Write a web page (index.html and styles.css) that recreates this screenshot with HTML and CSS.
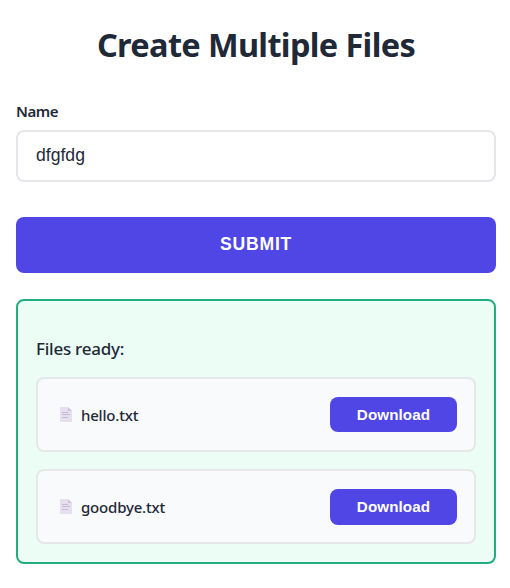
FILE: index.html
```html
<!DOCTYPE html>
<html lang="en">
<head>
<meta charset="utf-8">
<title>Create Multiple Files</title>
<link rel="stylesheet" href="styles.css">
</head>
<body>
<main class="page">
  <h1 class="title">Create Multiple Files</h1>
  <form class="form">
    <label class="label" for="name">Name</label>
    <input class="input" id="name" type="text" value="dfgfdg">
    <button class="submit" type="button">SUBMIT</button>
  </form>
  <section class="result">
    <p class="heading">Files ready:</p>
    <div class="file">
      <svg class="icon" viewBox="0 0 12 15"><path fill="#e6dfee" d="M0 0h8l4 4v11H0z"/><path fill="#cfc3dc" d="M8 0l4 4H8z"/><path stroke="#c3b5d0" stroke-width=".9" d="M2 5.5h6M2 7.5h8M2 10.5h6"/></svg>
      <span class="name">hello.txt</span>
      <button class="download" type="button">Download</button>
    </div>
    <div class="file">
      <svg class="icon" viewBox="0 0 12 15"><path fill="#e6dfee" d="M0 0h8l4 4v11H0z"/><path fill="#cfc3dc" d="M8 0l4 4H8z"/><path stroke="#c3b5d0" stroke-width=".9" d="M2 5.5h6M2 7.5h8M2 10.5h6"/></svg>
      <span class="name">goodbye.txt</span>
      <button class="download download-last" type="button">Download</button>
    </div>
  </section>
</main>
</body>
</html>
```
FILE: styles.css
```css
* { box-sizing: border-box; }
body {
  margin: 0;
  background: #fff;
  color: #1f2937;
  font-family: "Noto Sans", sans-serif;
}
.page { width: 480px; margin: 0 0 0 16px; padding-top: 20px; }
.title {
  margin: 0;
  height: 50px;
  line-height: 50px;
  font-size: 32.5px;
  font-weight: 700;
  text-align: center;
  letter-spacing: -0.65px;
  white-space: nowrap;
}
.form { display: flex; flex-direction: column; margin: 0; }
.label {
  margin-top: 29px;
  height: 24px;
  line-height: 24px;
  font-size: 15px;
  font-weight: 600;
  letter-spacing: -0.4px;
}
.input {
  margin-top: 7px;
  height: 52px;
  padding: 0 18px 2px;
  border: 2px solid #e5e7eb;
  border-radius: 8px;
  background: #fff;
  color: #1f2937;
  font: 17.6px "Liberation Sans", Arial, sans-serif;
}
.submit {
  margin-top: 35px;
  height: 56px;
  padding: 0 0 2px;
  border: 0;
  border-radius: 8px;
  background: #4f46e5;
  color: #fff;
  font: 700 17.6px "Liberation Sans", Arial, sans-serif;
  letter-spacing: 0.8px;
}
.result {
  margin-top: 26px;
  height: 265px;
  padding: 36px 18px 0;
  border: 2px solid #22ae80;
  border-radius: 8px;
  background: #ecfdf5;
}
.heading {
  margin: 0 0 16px;
  height: 24px;
  line-height: 24px;
  font-size: 17px;
  font-weight: 500;
  letter-spacing: -0.25px;
}
.file {
  display: flex;
  align-items: center;
  height: 75px;
  margin-bottom: 17px;
  padding: 0 17px 0 22px;
  border: 2px solid #e5e7eb;
  border-radius: 8px;
  background: #f9fafb;
}
.icon { width: 12px; height: 15px; margin-right: 9px; }
.name { font-size: 15px; font-weight: 500; letter-spacing: -0.2px; }
.download {
  width: 127px;
  height: 35px;
  margin-left: auto;
  padding: 0 0 1px;
  border: 0;
  border-radius: 8px;
  background: #4f46e5;
  color: #fff;
  font: 700 15.2px "Liberation Sans", Arial, sans-serif;
  letter-spacing: 0.1px;
}
.download-last { height: 36px; padding: 0; }
```
